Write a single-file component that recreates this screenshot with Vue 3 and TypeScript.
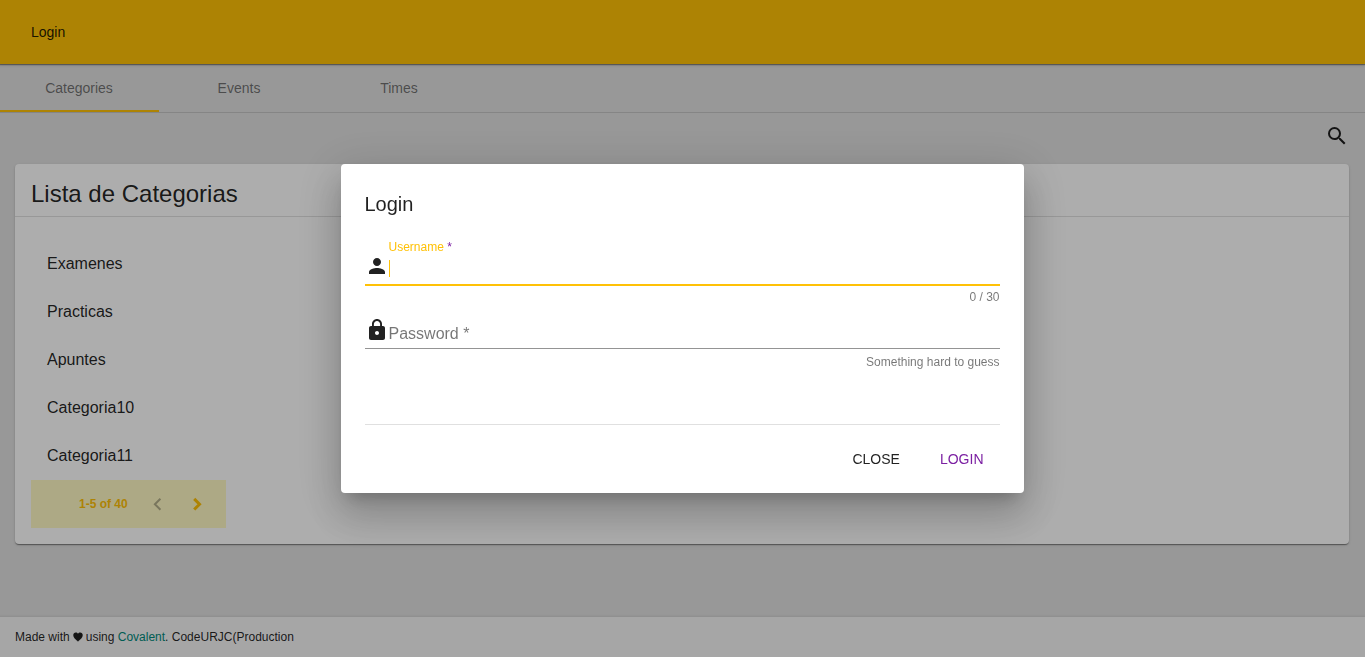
<script setup lang="ts">
import { ref } from 'vue'

const tabs = ['Categories', 'Events', 'Times']
const activeTab = ref('Categories')
const categories = ['Examenes', 'Practicas', 'Apuntes', 'Categoria10', 'Categoria11']
const username = ref('')
const password = ref('')
const maxLength = 30
const dialogOpen = ref(true)
</script>

<template>
  <div class="app">
    <header class="toolbar">
      <button type="button" class="toolbar-login" @click="dialogOpen = true">Login</button>
    </header>

    <nav class="tabs">
      <button
        v-for="tab in tabs"
        :key="tab"
        type="button"
        class="tab"
        :class="{ active: tab === activeTab }"
        @click="activeTab = tab"
      >{{ tab }}</button>
    </nav>

    <main class="content">
      <div class="search-bar">
        <button type="button" class="icon-button" aria-label="Search">
          <svg class="icon" viewBox="0 0 24 24"><path d="M15.5 14h-.79l-.28-.27A6.471 6.471 0 0 0 16 9.5 6.5 6.5 0 1 0 9.5 16c1.61 0 3.09-.59 4.23-1.57l.27.28v.79l5 4.99L20.49 19l-4.99-5zm-6 0C7.01 14 5 11.99 5 9.5S7.01 5 9.5 5 14 7.01 14 9.5 11.99 14 9.5 14z" /></svg>
        </button>
      </div>

      <section class="card">
        <h1 class="card-title">Lista de Categorias</h1>
        <div class="card-body">
          <ul class="list">
            <li v-for="category in categories" :key="category" class="list-item">{{ category }}</li>
          </ul>
          <div class="pager">
            <span class="range">1-5 of 40</span>
            <button type="button" class="page-button" aria-label="Previous page" disabled>
              <svg class="icon" viewBox="0 0 24 24"><path class="chevron" d="M15.400 6.700 9.900 12.200l5.500 5.500" /></svg>
            </button>
            <button type="button" class="page-button" aria-label="Next page">
              <svg class="icon" viewBox="0 0 24 24"><path class="chevron bold" d="m9.200 6.900 5.300 5.300-5.300 5.300" /></svg>
            </button>
          </div>
        </div>
      </section>
    </main>

    <footer class="footer">
      <span>Made with</span>
      <svg class="heart" viewBox="0 0 18 18" role="img" aria-label="love"><path d="M9 17.500C7 14.500 .5 11.500 .5 5.500.5 2.500 2.500.8 5 .8c1.800 0 3.200.9 4 2.400C9.800 1.700 11.200.8 13 .8c2.500 0 4.500 1.700 4.500 4.700 0 6-6.500 9-8.500 12z" /></svg>
      <span>using <a href="#" class="link">Covalent</a>. CodeURJC(Production</span>
    </footer>

    <div v-if="dialogOpen" class="backdrop">
      <form class="dialog" role="dialog" aria-labelledby="dialog-title" @submit.prevent>
        <h2 id="dialog-title" class="dialog-title">Login</h2>

        <div class="field">
          <label for="username" class="float-label">Username <span class="required">*</span></label>
          <div class="control focused">
            <svg class="icon" viewBox="0 0 24 24"><path d="M12 12c2.210 0 4-1.790 4-4s-1.790-4-4-4-4 1.790-4 4 1.790 4 4 4zm0 2c-2.670 0-8 1.340-8 4v2h16v-2c0-2.660-5.330-4-8-4z" /></svg>
            <span class="caret-box">
              <input id="username" v-model="username" class="input" type="text" :maxlength="maxLength" required />
            </span>
          </div>
          <div class="hint">{{ username.length }} / {{ maxLength }}</div>
        </div>

        <div class="field password">
          <div class="control">
            <svg class="icon" viewBox="0 0 24 24"><path d="M18 8h-1V6c0-2.760-2.240-5-5-5S7 3.240 7 6v2H6c-1.100 0-2 .9-2 2v10c0 1.100.9 2 2 2h12c1.100 0 2-.9 2-2V10c0-1.100-.9-2-2-2zm-6 9c-1.100 0-2-.9-2-2s.9-2 2-2 2 .9 2 2-.9 2-2 2zm3.100-9H8.900V6c0-1.710 1.390-3.100 3.100-3.100 1.710 0 3.100 1.390 3.100 3.100v2z" /></svg>
            <label for="password" class="inline-label">Password *</label>
            <input id="password" v-model="password" class="input" type="password" required />
          </div>
          <div class="hint">Something hard to guess</div>
        </div>

        <div class="actions">
          <button type="button" class="action" @click="dialogOpen = false">CLOSE</button>
          <button type="submit" class="action accent">LOGIN</button>
        </div>
      </form>
    </div>
  </div>
</template>

<style>
body {
  margin: 0;
  overflow: hidden;
}
</style>

<style scoped>
.app {
  box-sizing: border-box;
  display: flex;
  flex-direction: column;
  min-height: 100vh;
  margin-left: -1px;
  background: #e0e0e0;
  color: rgba(0, 0, 0, 0.87);
  font-family: "Liberation Sans", Arial, sans-serif;
  font-size: 14px;
}

button {
  padding: 0;
  border: 0;
  background: none;
  color: inherit;
  font: inherit;
  cursor: pointer;
}

.icon {
  display: block;
  flex: none;
  width: 24px;
  height: 24px;
  fill: currentColor;
}

.toolbar {
  z-index: 1;
  display: flex;
  align-items: center;
  height: 64px;
  padding: 0 32px;
  background: #ffc107;
  box-shadow: 0 1px 3px rgba(0, 0, 0, 0.2), 0 1px 1px rgba(0, 0, 0, 0.34);
}

.tabs {
  display: flex;
  border-bottom: 1px solid rgba(0, 0, 0, 0.12);
}

.tab {
  box-sizing: border-box;
  width: 160px;
  height: 48px;
  padding-top: 2px;
  border-bottom: 2px solid transparent;
  color: rgba(0, 0, 0, 0.52);
}

.tab.active {
  border-bottom-color: #ffc107;
}

.content {
  flex: 1;
  padding: 0 16px 16px;
}

.search-bar {
  display: flex;
  justify-content: flex-end;
  padding: 11px 0 16px;
}

.card {
  border-radius: 4px;
  background: #fff;
  box-shadow: 0 2px 1px -1px rgba(0, 0, 0, 0.2), 0 1px 1px rgba(0, 0, 0, 0.24), 0 1px 3px rgba(0, 0, 0, 0.12);
}

.card-title {
  margin: 0;
  padding: 14px 16px 6px;
  border-bottom: 1px solid rgba(0, 0, 0, 0.12);
  font-size: 24px;
  font-weight: 400;
  line-height: 32px;
}

.card-body {
  padding: 23px 16px 16px;
}

.list {
  margin: 0;
  padding: 0;
  list-style: none;
}

.list-item {
  padding: 0 16px;
  font-size: 16px;
  line-height: 48px;
}

.pager {
  display: inline-flex;
  align-items: center;
  height: 48px;
  padding: 0 9px 0 48px;
  background: #fff9c4;
  color: #ffc107;
  font-size: 12px;
  vertical-align: top;
}

.range {
  margin-right: 9px;
  font-weight: 700;
}

.page-button {
  display: grid;
  place-items: center;
  width: 40px;
  height: 40px;
}

.page-button:disabled {
  color: rgba(0, 0, 0, 0.3);
}

.chevron {
  fill: none;
  stroke: currentColor;
  stroke-width: 2;
}

.chevron.bold {
  stroke-width: 3;
}

.footer {
  display: flex;
  align-items: center;
  gap: 3px;
  height: 40px;
  padding: 0 16px;
  background: #f5f5f5;
  box-shadow: 0 -1px 2px rgba(0, 0, 0, 0.08);
  font-size: 12px;
}

.heart {
  width: 10px;
  height: 10px;
  fill: currentColor;
}

.link {
  color: #00897b;
  text-decoration: none;
}

.backdrop {
  position: fixed;
  inset: 0 0 0 -1px;
  z-index: 2;
  display: flex;
  align-items: center;
  justify-content: center;
  background: rgba(0, 0, 0, 0.32);
}

.dialog {
  box-sizing: border-box;
  width: 50%;
  padding: 24px 24px 16px;
  border-radius: 4px;
  background: #fff;
  box-shadow: 0 11px 15px -7px rgba(0, 0, 0, 0.2), 0 24px 38px 3px rgba(0, 0, 0, 0.14), 0 9px 46px 8px rgba(0, 0, 0, 0.12);
}

.dialog-title {
  margin: 0 0 20px;
  font-size: 20px;
  font-weight: 400;
  line-height: 32px;
}

.float-label {
  display: block;
  margin-left: 24px;
  color: #ffc107;
  font-size: 12px;
  line-height: 14px;
}

.required {
  color: #7b1fa2;
}

.control {
  display: flex;
  height: 30px;
  border-bottom: 1px solid rgba(0, 0, 0, 0.42);
}

.control.focused {
  border-bottom: 2px solid #ffc107;
}

.caret-box {
  position: relative;
  display: flex;
  flex: 1;
}

.caret-box::before {
  content: "";
  position: absolute;
  top: 6px;
  left: 0;
  width: 1px;
  height: 17px;
  background: #ffc107;
}

.input {
  flex: 1;
  min-width: 0;
  padding: 0;
  border: 0;
  outline: 0;
  background: none;
  color: inherit;
  font: inherit;
  font-size: 16px;
  caret-color: transparent;
}

.inline-label {
  color: rgba(0, 0, 0, 0.54);
  font-size: 16px;
  line-height: 32px;
}

.hint {
  padding-top: 4px;
  color: rgba(0, 0, 0, 0.54);
  font-size: 12px;
  line-height: 14px;
  text-align: right;
}

.password {
  margin-top: 14px;
}

.password .hint {
  padding-top: 6px;
}

.actions {
  display: flex;
  justify-content: flex-end;
  gap: 8px;
  margin-top: 55px;
  padding-top: 16px;
  border-top: 1px solid rgba(0, 0, 0, 0.12);
}

.action {
  height: 36px;
  padding: 0 16px;
}

.accent {
  color: #7b1fa2;
}
</style>
